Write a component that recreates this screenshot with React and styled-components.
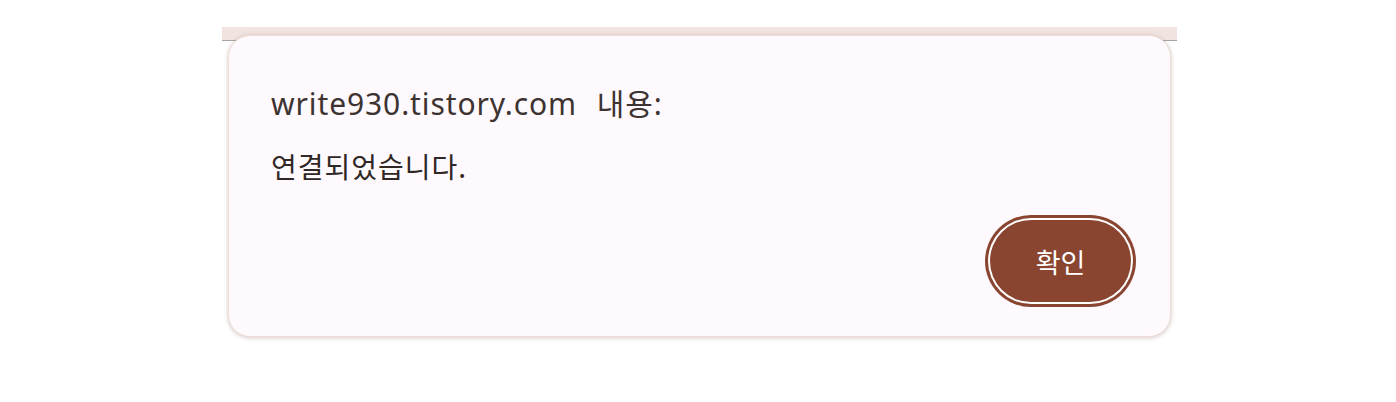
import React from 'react';
import styled, { createGlobalStyle } from 'styled-components';

const GlobalStyle = createGlobalStyle`
  html, body {
    margin: 0;
    padding: 0;
    background: #ffffff;
  }
  body {
    font-family: "Noto Sans", "Noto Sans CJK KR", sans-serif;
  }
`;

const Page = styled.div`
  width: 1396px;
  height: 402px;
  padding: 27px 0 0 222px;
  box-sizing: border-box;
`;

const Frame = styled.div`
  width: 955px;
  display: grid;
`;

const TopStrip = styled.div`
  grid-area: 1 / 1;
  height: 13px;
  background: #f0e3e0;
  border-bottom: 1px solid #a9a3a2;
`;

const Dialog = styled.div`
  grid-area: 1 / 1;
  margin: 8px 6px 0 6px;
  height: 302px;
  box-sizing: border-box;
  background: #fef9fd;
  border: 1px solid #f1dcd6;
  border-radius: 22px;
  box-shadow: 0 1px 4px rgba(90, 60, 55, 0.28);
  padding: 48px 39px 34px 42px;
  display: flex;
  flex-direction: column;
`;

const Title = styled.h1`
  margin: 0;
  font-family: "Noto Sans", "Noto Sans CJK KR", sans-serif;
  font-weight: 400;
  font-size: 30px;
  line-height: 40px;
  letter-spacing: 0.9px;
  word-spacing: 11px;
  color: #3d3331;
`;

const Message = styled.p`
  margin: 24px 0 0 0;
  font-family: "Noto Sans CJK KR", sans-serif;
  font-size: 28px;
  line-height: 36px;
  letter-spacing: 1px;
  color: #2f2725;
`;

const Actions = styled.div`
  margin-top: auto;
  display: flex;
  justify-content: flex-end;
`;

const Button = styled.button`
  width: 141px;
  height: 82px;
  padding: 0;
  border: none;
  border-radius: 41px;
  background: #8a4531;
  color: #ffffff;
  font-family: "Noto Sans CJK KR", sans-serif;
  font-size: 27px;
  box-shadow: 0 0 0 2px #ffffff, 0 0 0 5px #8a4531;
  cursor: pointer;
`;

export default function App() {
  return (
    <Page>
      <GlobalStyle />
      <Frame>
        <TopStrip />
        <Dialog>
          <Title>write930.tistory.com 내용:</Title>
          <Message>연결되었습니다.</Message>
          <Actions>
            <Button>확인</Button>
          </Actions>
        </Dialog>
      </Frame>
    </Page>
  );
}
